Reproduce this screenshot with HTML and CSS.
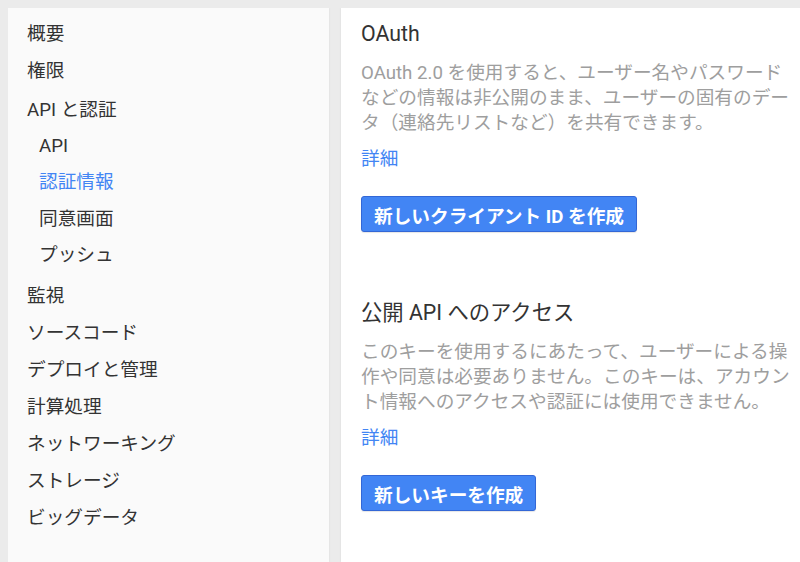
FILE: index.html
```html
<!DOCTYPE html>
<html lang="ja">
<head>
    <meta charset="UTF-8">
    <meta name="viewport" content="width=device-width, initial-scale=1.0">
    <title>認証情報</title>
    <link rel="stylesheet" href="styles.css">
</head>
<body>

    <div class="layout">
        <nav class="sidebar">
            <a class="nav-item" href="#">概要</a>
            <a class="nav-item" href="#">権限</a>
            <div class="nav-group">
                <a class="nav-item group-title" href="#">API と認証</a>
                <a class="nav-item sub-item" href="#">API</a>
                <a class="nav-item sub-item active" href="#">認証情報</a>
                <a class="nav-item sub-item" href="#">同意画面</a>
                <a class="nav-item sub-item" href="#">プッシュ</a>
            </div>
            <a class="nav-item" href="#">監視</a>
            <a class="nav-item" href="#">ソースコード</a>
            <a class="nav-item" href="#">デプロイと管理</a>
            <a class="nav-item" href="#">計算処理</a>
            <a class="nav-item" href="#">ネットワーキング</a>
            <a class="nav-item" href="#">ストレージ</a>
            <a class="nav-item" href="#">ビッグデータ</a>
        </nav>

        <main class="content">
            <section class="card-section">
                <h2>OAuth</h2>
                <p class="description">OAuth 2.0 を使用すると、ユーザー名やパスワードなどの情報は非公開のまま、ユーザーの固有のデータ（連絡先リストなど）を共有できます。</p>
                <a class="more-link" href="#">詳細</a>
                <button class="primary-button">新しいクライアント ID を作成</button>
            </section>

            <section class="card-section">
                <h2>公開 API へのアクセス</h2>
                <p class="description">このキーを使用するにあたって、ユーザーによる操作や同意は必要ありません。このキーは、アカウント情報へのアクセスや認証には使用できません。</p>
                <a class="more-link" href="#">詳細</a>
                <button class="primary-button">新しいキーを作成</button>
            </section>
        </main>
    </div>

</body>
</html>
```

FILE: styles.css
```css
body {
    font-family: Roboto, "Noto Sans CJK JP", sans-serif;
    margin: 8px 0 0 8px;
    background-color: #ebebeb;
    color: #333;
    overflow: hidden;
}
.layout {
    display: flex;
    gap: 12px;
    height: 554px;
}
.sidebar {
    width: 321px;
    flex-shrink: 0;
    background-color: #fafafa;
    padding-top: 8px;
    box-shadow: 0 0 2px rgba(0, 0, 0, 0.08);
    display: flex;
    flex-direction: column;
}
.nav-item {
    display: block;
    padding: 6px 0 6px 19px;
    font-size: 18.67px;
    line-height: 25px;
    color: #333;
    text-decoration: none;
}
.nav-group {
    margin-top: 3px;
    margin-bottom: 4px;
    display: flex;
    flex-direction: column;
}
.group-title {
    padding-top: 5px;
    padding-bottom: 5px;
}
.sub-item {
    padding-left: 31px;
    padding-top: 5.75px;
    padding-bottom: 5.75px;
}
.sub-item.active {
    color: #4285f4;
}
.content {
    flex: 1;
    background-color: #fff;
    padding: 13px 8px 0 20px;
    box-shadow: 0 0 2px rgba(0, 0, 0, 0.08);
}
.card-section {
    margin-bottom: 68px;
}
.card-section h2 {
    margin: 0 0 14px;
    font-size: 21.33px;
    line-height: 26px;
    font-weight: normal;
    color: #333;
}
.description {
    margin: 0 0 11px;
    font-size: 18.67px;
    line-height: 25px;
    color: #9e9e9e;
}
.more-link {
    display: block;
    font-size: 18.67px;
    line-height: 25px;
    color: #4285f4;
    text-decoration: none;
    margin-bottom: 24px;
}
.primary-button {
    font-family: inherit;
    font-size: 18.67px;
    font-weight: bold;
    height: 36px;
    padding: 0 12px;
    color: #fff;
    background-color: #4285f4;
    border: 1px solid #3367d6;
    border-radius: 3px;
    box-shadow: 0 1px 1px rgba(0, 0, 0, 0.1);
}
```
